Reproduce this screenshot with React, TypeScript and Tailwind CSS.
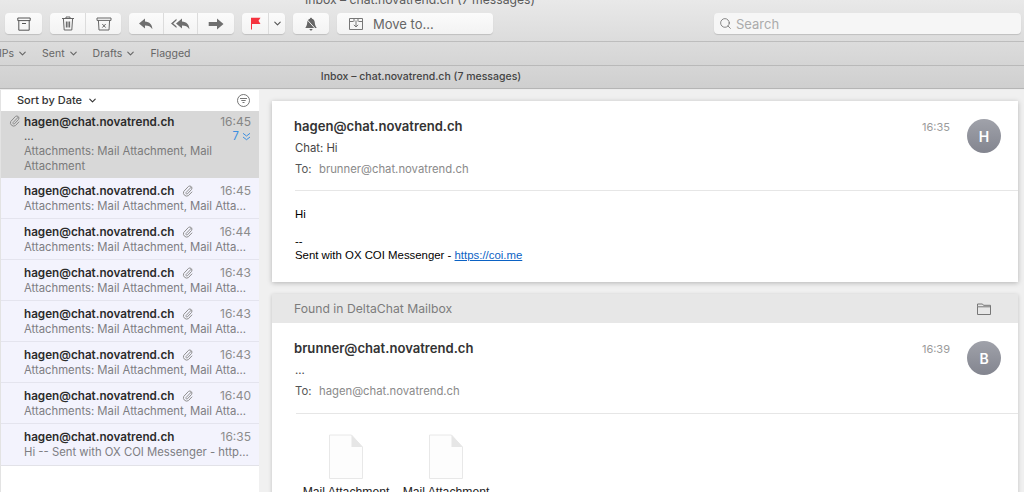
import { ChevronDown, Search } from 'lucide-react'

const SF = "font-['Inter','Liberation_Sans',sans-serif]"

const ROWS = [
  { time: '16:45', clip: true, text: 'Attachments: Mail Attachment, Mail Atta...' },
  { time: '16:44', clip: true, text: 'Attachments: Mail Attachment, Mail Atta...' },
  { time: '16:43', clip: true, text: 'Attachments: Mail Attachment, Mail Atta...' },
  { time: '16:43', clip: true, text: 'Attachments: Mail Attachment, Mail Atta...' },
  { time: '16:43', clip: true, text: 'Attachments: Mail Attachment, Mail Atta...' },
  { time: '16:40', clip: true, text: 'Attachments: Mail Attachment, Mail Atta...' },
  { time: '16:35', clip: false, text: 'Hi -- Sent with OX COI Messenger - http...' },
]

function Clip({ className }: { className?: string }) {
  return (
    <svg viewBox="0 0 12 12" className={className} fill="none" stroke="currentColor" strokeWidth="1" strokeLinecap="round">
      <path d="M9.8 2.6 4.6 8a1 1 0 0 0 1.4 1.3l4.2-4.5a2.2 2.2 0 0 0-3.1-3L2.3 6.9a3.3 3.3 0 0 0 4.6 4.2l3.6-3.7" transform="translate(-0.6 -0.4)" />
    </svg>
  )
}

function Btn({ w, last, children }: { w: string; last?: boolean; children: React.ReactNode }) {
  return (
    <div className={`flex h-full items-center justify-center ${w} ${last ? '' : 'border-r border-[#dcdcdc]'}`}>
      {children}
    </div>
  )
}

function Group({ children }: { children: React.ReactNode }) {
  return (
    <div className="flex h-[21px] items-center overflow-hidden rounded-[4px] bg-gradient-to-b from-[#fbfbfb] to-[#f3f3f3] shadow-[0_1px_1px_rgba(0,0,0,0.14)]">
      {children}
    </div>
  )
}

function Toolbar() {
  return (
    <div className="h-[42px] overflow-hidden border-b border-[#bdbdbd] bg-gradient-to-b from-[#e9e9e9] to-[#dcdcdc]">
      <div className={`-mt-[7px] h-[14px] pr-[184px] text-center text-[12.2px] leading-[14px] text-[#5a5a5a] ${SF}`}>
        Inbox – chat.novatrend.ch (7 messages)
      </div>
      <div className="mt-[6px] flex items-center gap-2 pl-[5px] pr-[3px]">
        <Group>
          <Btn w="w-[37px]" last>
            <svg viewBox="0 0 14 14" className="h-[14px] w-[14px]" fill="none" stroke="#555" strokeWidth="1">
              <path d="M.8 1h12.4v2.6H.8zM1.8 3.6v9.6h10.4V3.6M5 6.5h4" />
            </svg>
          </Btn>
        </Group>
        <Group>
          <Btn w="w-[36px]">
            <svg viewBox="0 0 14 15" className="h-[15px] w-[14px]" fill="none" stroke="#666" strokeWidth="1">
              <path d="M1 2.5h12M5 2.5V1h4v1.5M2.4 2.5l.8 11.5h7.6l.8-11.5" />
              <path d="M5.4 5.5v6M7 5.5v6M8.6 5.5v6" strokeWidth="1.1" />
            </svg>
          </Btn>
          <Btn w="w-[35px]" last>
            <svg viewBox="0 0 16 14" className="h-[14px] w-[16px]" fill="none" stroke="#666" strokeWidth="1">
              <path d="M1 1h14v2.4H1zM2.4 3.4 3 13h10l.6-9.6M6.3 7l3.4 3.6M9.7 7l-3.4 3.6" />
            </svg>
          </Btn>
        </Group>
        <Group>
          <Btn w="w-[35px]">
            <svg viewBox="0 0 16 12" className="h-[12px] w-[16px]" fill="#6f6f6f">
              <path d="M7 .5 1 5.6l6 4.9V7.4c3.4 0 5.6.7 7.4 3.8C14.2 6.5 11.5 3.7 7 3.5z" />
            </svg>
          </Btn>
          <Btn w="w-[34px]">
            <svg viewBox="0 0 21 12" className="h-[12px] w-[21px]" fill="#6f6f6f">
              <path d="M6.5.8 1 5.5 6.5 10V8.3L3.2 5.5l3.3-2.9z" />
              <path d="M12 .5 6 5.6l6 4.9V7.4c3.4 0 5.6.7 7.4 3.8C19.2 6.5 16.5 3.7 12 3.5z" />
            </svg>
          </Btn>
          <Btn w="w-[36px]" last>
            <svg viewBox="0 0 16 12" className="h-[12px] w-[16px]" fill="#6f6f6f">
              <path d="M9 .5 15.5 6 9 11.5V8H.7V4H9z" />
            </svg>
          </Btn>
        </Group>
        <Group>
          <Btn w="w-[27px]">
            <svg viewBox="0 0 11 13" className="h-[13px] w-[11px]">
              <path d="M1 .8h9.500L8.500 3.800l2 3.200H2v5.500H1z" fill="#f5333f" />
            </svg>
          </Btn>
          <Btn w="w-[16px]" last>
            <ChevronDown size={11} strokeWidth={2.4} color="#555" />
          </Btn>
        </Group>
        <Group>
          <Btn w="w-[36px]" last>
            <svg viewBox="0 0 14 14" className="h-[14px] w-[14px]">
              <path d="M7 .8c.6 0 1 .4 1 1 1.900.5 2.600 2 2.800 4 .2 2 .6 3.400 1.700 4.700v.6h-11v-.6C2.600 9.200 3 7.800 3.200 5.800c.2-2 .9-3.500 2.800-4 0-.6.4-1 1-1zM5.500 12h3c0 .9-.7 1.500-1.500 1.500s-1.500-.6-1.500-1.500z" fill="#666" />
              <path d="M2 1.500 12.500 13" stroke="#f0f0f0" strokeWidth="1" />
            </svg>
          </Btn>
        </Group>
        <Group>
          <div className={`flex h-full w-[156px] items-center pl-[12px] text-[13px] text-[#666] ${SF}`}>
            <svg viewBox="0 0 14 12" className="mr-[10px] h-[12px] w-[14px]" fill="none" stroke="#777" strokeWidth="1">
              <path d="M.5.5h13v11H.5zM.5 3.500h4M9.500 3.500h4M5 .5v3M9 .5v3M7 2.500v6.500M4.800 6.800 7 9l2.200-2.200" />
            </svg>
            <span className="mt-[2px]">Move to...</span>
          </div>
        </Group>
        <div className={`ml-auto flex h-[21px] w-[307px] items-center rounded-[4px] bg-[#f6f6f6] pl-[5px] text-[13px] text-[#ababab] shadow-[0_1px_1px_rgba(0,0,0,0.14)] ${SF}`}>
          <Search size={13} strokeWidth={1.4} color="#666" className="mr-[4px]" />
          <span className="mt-[2px]">Search</span>
        </div>
      </div>
    </div>
  )
}

function Favorites() {
  const item = 'flex items-center gap-[3px]'
  return (
    <div className={`flex h-[24px] items-center gap-[14px] overflow-hidden border-b border-[#b9b9b9] bg-gradient-to-b from-[#dcdcdc] to-[#d5d5d5] text-[10.5px] text-[#666] ${SF}`}>
      <div className={`${item} -ml-px`}>IPs <ChevronDown size={11} strokeWidth={2.4} /></div>
      <div className={item}>Sent <ChevronDown size={11} strokeWidth={2.4} /></div>
      <div className={item}>Drafts <ChevronDown size={11} strokeWidth={2.4} /></div>
      <div>Flagged</div>
    </div>
  )
}

function Row({ time, clip, text }: { time: string; clip: boolean; text: string }) {
  return (
    <div className={`h-[41px] pl-[23px] pr-[8px] pt-[6px] ${SF}`}>
      <div className="flex h-[14px] items-center text-[11.7px]">
        <span className="mt-[2px] w-[151px] font-semibold whitespace-nowrap text-[#2b2b2b]">hagen@chat.novatrend.ch</span>
        {clip && <Clip className="ml-[7px] h-[12px] w-[12px] text-[#8f8f8f]" />}
        <span className="ml-auto text-[12px] text-[#8c8c8c]">{time}</span>
      </div>
      <div className="mt-[1px] text-[11.3px] leading-[15px] whitespace-nowrap text-[#7d7d82]">{text}</div>
    </div>
  )
}

function Sidebar() {
  return (
    <div className="flex w-[259px] shrink-0 flex-col self-stretch border-l border-[#e3e3e3] bg-white">
      <div className={`flex h-[21px] items-center pl-[16px] pr-[9px] text-[11px] font-medium text-[#333] ${SF}`}>
        Sort by Date <ChevronDown size={11} strokeWidth={2.4} className="ml-[5px]" />
        <svg viewBox="0 0 13 13" className="ml-auto h-[13px] w-[13px]" fill="none" stroke="#666" strokeWidth="0.9">
          <circle cx="6.5" cy="6.5" r="6" />
          <path d="M3 4.500h7M4.300 6.500h4.400M5.500 8.500h2" />
        </svg>
      </div>
      <div className={`relative h-[67px] bg-[#d8d8d8] pl-[23px] pr-[8px] pt-[4px] ${SF}`}>
        <Clip className="absolute left-[8px] top-[4px] h-[12px] w-[12px] text-[#8a8a8a]" />
        <div className="flex h-[14px] items-center text-[11.7px]">
          <span className="mt-[2px] font-semibold text-[#2b2b2b]">hagen@chat.novatrend.ch</span>
          <span className="ml-auto text-[12px] text-[#858585]">16:45</span>
        </div>
        <div className="flex h-[15px] items-center text-[11.3px] text-[#555]">
          ...
          <span className="ml-auto flex items-center gap-[3px] text-[#3d8fe0]">
            7
            <svg viewBox="0 0 9 9" className="h-[9px] w-[9px]" fill="none" stroke="#3d8fe0" strokeWidth="1">
              <path d="M1 1.300 4.500 4 8 1.300M1 5 4.500 7.700 8 5" />
            </svg>
          </span>
        </div>
        <div className="text-[11.3px] leading-[14.5px] text-[#7a7a7a]">Attachments: Mail Attachment, Mail Attachment</div>
      </div>
      <div className="divide-y divide-[#e4e4ee] border-b border-[#e2e2e8] bg-[#f3f3fd]">
        {ROWS.map((r, i) => (
          <Row key={i} {...r} />
        ))}
      </div>
    </div>
  )
}

function Avatar({ letter }: { letter: string }) {
  return (
    <div className={`flex h-[34px] w-[34px] items-center justify-center rounded-full bg-gradient-to-b from-[#a0a2aa] to-[#83858f] text-[14px] font-semibold text-white ${SF}`}>
      {letter}
    </div>
  )
}

function MailHead({ from, subject, to, time, letter }: { from: string; subject: string; to: string; time: string; letter: string }) {
  return (
    <div className={`relative h-[90px] pl-[22px] ${SF}`}>
      <div className="pt-[16px] text-[13.1px] leading-[18px] font-semibold text-[#333]">{from}</div>
      <div className="mt-[5px] ml-px text-[11.3px] leading-[16px] text-[#444]">{subject}</div>
      <div className="mt-[5px] ml-px flex text-[11.3px] leading-[16px]">
        <span className="w-[24px] text-[#555]">To:</span>
        <span className="text-[#8a8a8a]">{to}</span>
      </div>
      <div className="absolute right-[17px] top-[18px] flex items-start gap-[17px]">
        <span className="mt-[1px] text-[11px] leading-[14px] text-[#9b9b9b]">{time}</span>
        <Avatar letter={letter} />
      </div>
    </div>
  )
}

function FileTile() {
  return (
    <div className="flex w-[100px] flex-col items-center">
      <svg viewBox="0 0 36 46" className="h-[46px] w-[36px]">
        <path d="M1.5 1h22l11 12v31.500h-33z" fill="#fdfdfd" stroke="#e8e8e8" strokeWidth="1" />
        <path d="M23.5 1v12h11z" fill="#e6e6e6" />
      </svg>
      <div className="mt-[5px] font-['Liberation_Sans',sans-serif] text-[12.2px] leading-[14px] whitespace-nowrap text-[#222]">Mail Attachment</div>
    </div>
  )
}

function Detail() {
  return (
    <div className="min-w-0 flex-1 bg-[#f0f0f0] pt-[11px] pl-[13px] pr-[6px]">
      <div className="h-[181px] bg-white shadow-[0_1px_5px_rgba(0,0,0,0.25)]">
        <MailHead from="hagen@chat.novatrend.ch" subject="Chat: Hi" to="brunner@chat.novatrend.ch" time="16:35" letter="H" />
        <div className="-mt-px ml-[23px] border-t border-[#e6e6e6] pt-[16px] font-['Liberation_Sans',sans-serif] text-[11.4px] leading-[14px] text-black">
          <div>Hi</div>
          <div className="mt-[13px]">--</div>
          <div>
            Sent with OX COI Messenger - <span className="text-[#0b62c4] underline">https://coi.me</span>
          </div>
        </div>
      </div>
      <div className="mt-[12px] bg-white shadow-[0_1px_4px_rgba(0,0,0,0.2)]">
        <div className={`flex h-[29px] items-center justify-between bg-[#e7e7e7] pl-[22px] pr-[27px] text-[12.2px] text-[#7c7c7c] ${SF}`}>
          <span className="mt-[2px]">Found in DeltaChat Mailbox</span>
          <svg viewBox="0 0 14 12" className="h-[12px] w-[14px]" fill="none" stroke="#777" strokeWidth="1">
            <path d="M.5 3.300V1h5l1 1.300h7v9.200H.5zM.5 3.800h13" />
          </svg>
        </div>
        <MailHead from="brunner@chat.novatrend.ch" subject="..." to="hagen@chat.novatrend.ch" time="16:39" letter="B" />
        <div className="ml-[24px] flex border-t border-[#e6e6e6] pt-[20px]">
          <FileTile />
          <FileTile />
        </div>
      </div>
    </div>
  )
}

export default function App() {
  return (
    <div className="flex h-[492px] w-[1024px] flex-col overflow-hidden bg-white">
      <Toolbar />
      <Favorites />
      <div className={`flex h-[23px] shrink-0 items-center justify-center border-b border-[#b5b5b5] bg-gradient-to-b from-[#d6d6d6] to-[#cfcfcf] pr-[182px] text-[10.5px] font-medium text-[#444] ${SF}`}>
        Inbox – chat.novatrend.ch (7 messages)
      </div>
      <div className="flex min-h-0 flex-1 overflow-hidden bg-[#ececec] pt-px">
        <Sidebar />
        <Detail />
      </div>
    </div>
  )
}
